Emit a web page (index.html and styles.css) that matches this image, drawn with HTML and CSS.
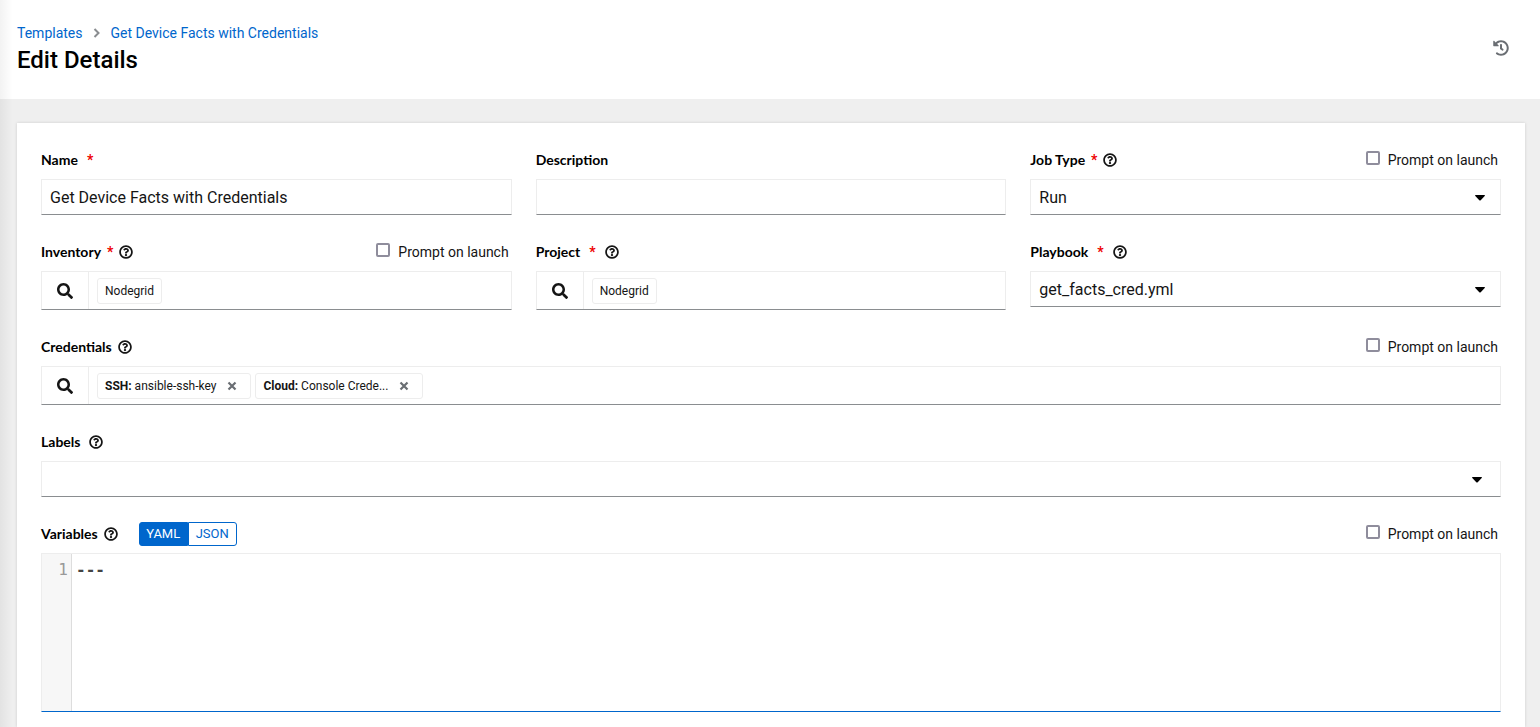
FILE: index.html
```html
<!DOCTYPE html>
<html lang="en">
<head>
<meta charset="utf-8">
<title>Edit Details</title>
<link rel="stylesheet" href="styles.css">
</head>
<body>
<svg class="sprite" aria-hidden="true">
  <symbol id="help" viewBox="0 0 512 512"><path d="M256 8C119.043 8 8 119.083 8 256c0 136.997 111.043 248 248 248s248-111.003 248-248C504 119.083 392.957 8 256 8zm0 432c-101.7 0-184-82.3-184-184S154.300 72 256 72s184 82.300 184 184-82.300 184-184 184zm107.244-239.200c0 67.052-72.421 68.084-72.421 92.863V300c0 6.627-5.373 12-12 12h-45.647c-6.627 0-12-5.373-12-12v-8.659c0-35.745 27.1-50.034 47.579-61.516 17.561-9.845 28.324-16.541 28.324-29.579 0-17.246-21.999-28.693-39.784-28.693-23.189 0-33.894 10.977-48.942 29.969-4.057 5.12-11.46 6.071-16.666 2.124l-27.824-21.098c-5.107-3.872-6.251-11.066-2.644-16.363C184.846 131.491 214.94 112 261.794 112c49.071 0 101.45 38.304 101.45 88.8zM298 368c0 23.159-18.841 42-42 42s-42-18.841-42-42 18.841-42 42-42 42 18.841 42 42z"/></symbol>
  <symbol id="search" viewBox="0 0 512 512"><path d="M505 442.700L405.300 343c-4.500-4.500-10.600-7-17-7H372c27.600-35.300 44-79.700 44-128C416 93.100 322.900 0 208 0S0 93.100 0 208s93.100 208 208 208c48.300 0 92.700-16.400 128-44v16.300c0 6.400 2.500 12.500 7 17l99.700 99.700c9.400 9.400 24.600 9.400 33.900 0l28.300-28.300c9.400-9.400 9.400-24.600.1-34zM208 336c-70.700 0-128-57.200-128-128 0-70.700 57.200-128 128-128 70.700 0 128 57.200 128 128 0 70.700-57.200 128-128 128z"/></symbol>
  <symbol id="history" viewBox="0 0 512 512"><path d="M504 255.531c.253 136.640-111.180 248.372-247.820 248.468-59.015.042-113.223-20.530-155.822-54.911-11.077-8.940-11.905-25.541-1.839-35.607l11.267-11.267c8.609-8.609 22.353-9.551 31.891-1.984C173.062 425.135 212.781 440 256 440c101.705 0 184-82.311 184-184 0-101.705-82.311-184-184-184-48.814 0-93.149 18.969-126.068 49.932l50.754 50.754c10.080 10.080 2.941 27.314-11.313 27.314H24c-8.837 0-16-7.163-16-16V38.627c0-14.254 17.234-21.393 27.314-11.314l49.372 49.372C129.209 34.136 189.552 8 256 8c136.810 0 247.747 110.780 248 247.531zm-180.912 78.784l9.823-12.630c8.138-10.463 6.253-25.542-4.210-33.679L288 256.349V152c0-13.255-10.745-24-24-24h-16c-13.255 0-24 10.745-24 24v135.651l65.409 50.874c10.463 8.137 25.541 6.253 33.679-4.210z"/></symbol>
  <symbol id="times" viewBox="0 0 10 10"><path d="M1.500 1.500 8.500 8.500M8.500 1.500 1.500 8.500" fill="none" stroke="currentColor" stroke-width="2.200"/></symbol>
  <symbol id="caret" viewBox="0 0 10 6"><path d="M.6 0h8.800q.9.200.3 1L5.700 5.200q-.7.600-1.400 0L.3 1Q-.3.200.6 0z"/></symbol>
</svg>

<header class="page-header">
  <div>
    <nav class="breadcrumb" aria-label="Breadcrumb">
      <a href="#templates">Templates</a>
      <svg class="chevron" viewBox="0 0 8 10" aria-hidden="true"><path d="M1.500 1 5.500 5 1.500 9"/></svg>
      <a href="#template">Get Device Facts with Credentials</a>
    </nav>
    <h1>Edit Details</h1>
  </div>
  <button class="icon-button history" type="button" aria-label="History"><svg class="icon"><use href="#history"/></svg></button>
</header>

<main class="page-main">
  <form class="card">
    <div class="columns">
      <div class="field">
        <div class="field-head wide"><label for="name">Name</label><span class="required">*</span></div>
        <input class="control" id="name" type="text" value="Get Device Facts with Credentials">
      </div>
      <div class="field">
        <div class="field-head"><label for="description">Description</label></div>
        <input class="control" id="description" type="text">
      </div>
      <div class="field">
        <div class="field-head"><label for="job-type">Job Type</label><span class="required">*</span><button class="icon-button help" type="button" aria-label="Job type help"><svg class="icon"><use href="#help"/></svg></button>
          <label class="prompt"><input type="checkbox">Prompt on launch</label></div>
        <div class="select-wrap"><select class="control" id="job-type"><option>Run</option></select><svg class="caret"><use href="#caret"/></svg></div>
      </div>
      <div class="field">
        <div class="field-head"><label for="inventory">Inventory</label><span class="required">*</span><button class="icon-button help" type="button" aria-label="Inventory help"><svg class="icon"><use href="#help"/></svg></button>
          <label class="prompt"><input type="checkbox">Prompt on launch</label></div>
        <div class="lookup"><button class="icon-button search" id="inventory" type="button" aria-label="Search inventory"><svg class="icon"><use href="#search"/></svg></button><div class="chips"><span class="chip">Nodegrid</span></div></div>
      </div>
      <div class="field">
        <div class="field-head wide"><label for="project">Project</label><span class="required">*</span><button class="icon-button help" type="button" aria-label="Project help"><svg class="icon"><use href="#help"/></svg></button></div>
        <div class="lookup"><button class="icon-button search" id="project" type="button" aria-label="Search project"><svg class="icon"><use href="#search"/></svg></button><div class="chips"><span class="chip">Nodegrid</span></div></div>
      </div>
      <div class="field">
        <div class="field-head wide"><label for="playbook">Playbook</label><span class="required">*</span><button class="icon-button help" type="button" aria-label="Playbook help"><svg class="icon"><use href="#help"/></svg></button></div>
        <div class="select-wrap"><select class="control" id="playbook"><option>get_facts_cred.yml</option></select><svg class="caret"><use href="#caret"/></svg></div>
      </div>
    </div>

    <div class="field">
      <div class="field-head"><label for="credentials">Credentials</label><button class="icon-button help" type="button" aria-label="Credentials help"><svg class="icon"><use href="#help"/></svg></button>
        <label class="prompt"><input type="checkbox">Prompt on launch</label></div>
      <div class="lookup"><button class="icon-button search" id="credentials" type="button" aria-label="Search credentials"><svg class="icon"><use href="#search"/></svg></button>
        <div class="chips">
          <span class="chip"><span><b>SSH:</b> ansible-ssh-key</span><button class="icon-button remove" type="button" aria-label="Remove ansible-ssh-key"><svg class="icon"><use href="#times"/></svg></button></span>
          <span class="chip"><span><b>Cloud:</b> Console Crede...</span><button class="icon-button remove" type="button" aria-label="Remove console credential"><svg class="icon"><use href="#times"/></svg></button></span>
        </div>
      </div>
    </div>

    <div class="field">
      <div class="field-head wide"><label for="labels">Labels</label><button class="icon-button help" type="button" aria-label="Labels help"><svg class="icon"><use href="#help"/></svg></button></div>
      <div class="select-wrap inset"><select class="control" id="labels"><option></option></select><svg class="caret"><use href="#caret"/></svg></div>
    </div>

    <div class="field">
      <div class="field-head"><label for="variables">Variables</label><button class="icon-button help" type="button" aria-label="Variables help"><svg class="icon"><use href="#help"/></svg></button>
        <div class="toggle"><button class="active" type="button">YAML</button><button type="button">JSON</button></div>
        <label class="prompt"><input type="checkbox">Prompt on launch</label></div>
      <div class="editor"><div class="gutter">1</div><textarea id="variables" spellcheck="false">---</textarea></div>
    </div>
  </form>
</main>
</body>
</html>
```
FILE: styles.css
```css
* { box-sizing: border-box; }

body {
  display: flex;
  flex-direction: column;
  min-height: 100vh;
  margin: 0;
  background: #efefef;
  color: #151515;
  font: 14px/24px Roboto, "Noto Sans", sans-serif;
}

/* Soft shadow cast by the sidebar on the left edge */
body::before {
  content: "";
  position: fixed;
  inset: 0 auto 0 0;
  width: 12px;
  background: linear-gradient(to right, rgba(3, 3, 3, .05), rgba(3, 3, 3, 0));
  pointer-events: none;
}

button, input, select, textarea { font: inherit; color: inherit; }
button { padding: 0; border: 0; background: none; cursor: pointer; }
.sprite { display: none; }
.icon { display: block; width: 100%; height: 100%; fill: currentColor; }
.icon-button { flex: none; width: 16px; height: 16px; }

.page-header {
  display: flex;
  justify-content: space-between;
  padding: 21px 31px 24px 17px;
  background: #fff;
}
.breadcrumb { display: flex; align-items: center; gap: 10px; }
.breadcrumb a { color: #06c; text-decoration: none; }
.chevron { width: 8px; height: 10px; fill: none; stroke: #8a8d90; stroke-width: 2; }
h1 { margin: 0; color: #000; font-size: 24px; line-height: 30px; font-weight: 500; }
.history { margin-top: 19px; color: #6a6e73; }

.page-main { display: flex; flex: 1; padding: 24px 15px 0 17px; }
.card {
  display: flex;
  flex: 1;
  flex-direction: column;
  gap: 24px;
  min-width: 0;
  padding: 24px 24px 8px;
  background: #fff;
  box-shadow: 0 0 3px rgba(3, 3, 3, .14);
}
.columns {
  display: grid;
  grid-template-columns: repeat(3, minmax(0, 1fr));
  gap: 24px;
}
.field { min-width: 0; }
.field-head { display: flex; align-items: center; gap: 6px; height: 26px; margin-bottom: 6px; }
.field-head.wide { gap: 9px; }
.field-head > label { color: #000; font-family: Lato, Roboto, sans-serif; font-weight: 700; }
.required { color: #e00; font-weight: 700; }
.help { width: 14px; height: 14px; }
.field-head > .prompt {
  display: flex;
  align-items: center;
  gap: 8px;
  margin-left: auto;
  padding-right: 3px;
  color: #151515;
  font-family: inherit;
  font-weight: 400;
}
.prompt input {
  appearance: none;
  width: 14px;
  height: 14px;
  margin: 0 0 4px;
  border: 2px solid #8f8d9c;
  border-radius: 2px;
  background: #fff;
}

.control, .lookup, .editor {
  width: 100%;
  border: 1px solid #ededed;
  border-bottom-color: #8a8d90;
  border-radius: 0;
  background: #fff;
}
.control {
  display: block;
  height: 36px;
  padding: 0 8px;
  appearance: none;
  font-size: 16px;
  outline: 0;
}
select.control { padding-top: 1px; }
.select-wrap { position: relative; }
.caret {
  position: absolute;
  top: 16px;
  right: 16px;
  width: 10px;
  height: 6px;
  pointer-events: none;
}
.inset .caret { right: 19px; }

.lookup { display: flex; height: 39px; }
.search { width: 47px; height: auto; padding: 0 15px; border-right: 1px solid #ededed; }
.search .icon { height: 16px; }
.chips { display: flex; align-items: center; gap: 4px; padding: 0 8px; }
.chip {
  display: flex;
  align-items: center;
  gap: 11px;
  height: 26px;
  padding: 0 7px;
  border: 1px solid #ededed;
  border-radius: 3px;
  font-size: 12px;
}
.remove { width: 10px; height: 10px; margin-right: 6px; color: #6a6e73; }

.toggle { display: flex; margin-left: 15px; }
.toggle button {
  width: 49px;
  height: 24px;
  border: 1px solid #06c;
  border-radius: 0 3px 3px 0;
  color: #06c;
  font-size: 13px;
  line-height: 22px;
}
.toggle .active { border-radius: 3px 0 0 3px; background: #06c; color: #fff; }

.editor {
  display: flex;
  height: 159px;
  border-bottom-color: #06c;
  font: 16px/24px "DejaVu Sans Mono", monospace;
}
.gutter { width: 30px; padding: 4px 3px 0; border-right: 1px solid #ddd; background: #f7f7f7; color: #999; text-align: right; }
.editor textarea { flex: 1; padding: 4px; border: 0; outline: 0; resize: none; color: #444; font-weight: 700; }
```
